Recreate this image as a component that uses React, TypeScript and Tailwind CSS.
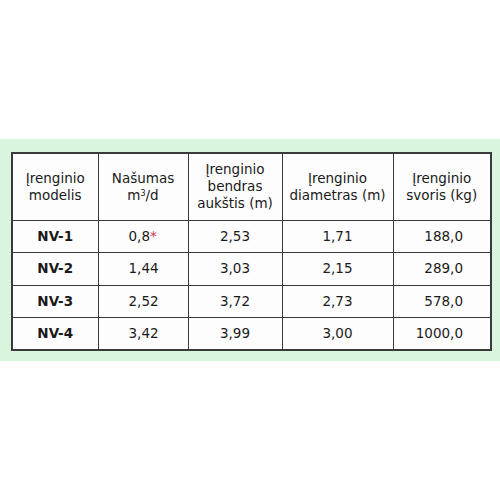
const rows = [
  { model: "NV-1", q: "0,8", star: true, h: "2,53", d: "1,71", w: "188,0" },
  { model: "NV-2", q: "1,44", star: false, h: "3,03", d: "2,15", w: "289,0" },
  { model: "NV-3", q: "2,52", star: false, h: "3,72", d: "2,73", w: "578,0" },
  { model: "NV-4", q: "3,42", star: false, h: "3,99", d: "3,00", w: "1000,0" },
];

export default function App() {
  const cell = "border-[1.5px] border-[#3a3a3a] align-middle";
  return (
    <div
      className="w-[500px] h-[500px] bg-white pt-[139px]"
      style={{ fontFamily: '"DejaVu Sans", Verdana, sans-serif' }}
    >
      <div className="bg-[#d9f5dd] pl-[11px] pr-[10px] pt-[13px] pb-[10px]">
        <table className="border-collapse border-2 border-[#3a3a3a] bg-[#fdfdfd] text-[13.5px] leading-[17px] text-[#1a1a1a] w-[479px] table-fixed">
          <colgroup>
            <col className="w-[86px]" />
            <col className="w-[90px]" />
            <col className="w-[94px]" />
            <col className="w-[111px]" />
            <col className="w-[98px]" />
          </colgroup>
          <thead>
            <tr className="h-[67px]">
              <th className={`${cell} font-normal text-center`}>
                Įrenginio
                <br />
                modelis
              </th>
              <th className={`${cell} font-normal text-center`}>
                Našumas
                <br />
                m<sup className="text-[8px]">3</sup>/d
              </th>
              <th className={`${cell} font-normal text-center`}>
                Įrenginio
                <br />
                bendras
                <br />
                aukštis (m)
              </th>
              <th className={`${cell} font-normal text-center`}>
                Įrenginio
                <br />
                diametras (m)
              </th>
              <th className={`${cell} font-normal text-center`}>
                Įrenginio
                <br />
                svoris (kg)
              </th>
            </tr>
          </thead>
          <tbody>
            {rows.map((r) => (
              <tr key={r.model} className="h-[32.5px]">
                <td className={`${cell} text-center font-bold`}>{r.model}</td>
                <td className={`${cell} pl-[30px]`}>
                  {r.q}
                  {r.star && <span className="text-[#e03a3a]">*</span>}
                </td>
                <td className={`${cell} text-center`}>{r.h}</td>
                <td className={`${cell} text-center`}>{r.d}</td>
                <td className={`${cell} text-right pr-[27px]`}>{r.w}</td>
              </tr>
            ))}
          </tbody>
        </table>
      </div>
    </div>
  );
}
